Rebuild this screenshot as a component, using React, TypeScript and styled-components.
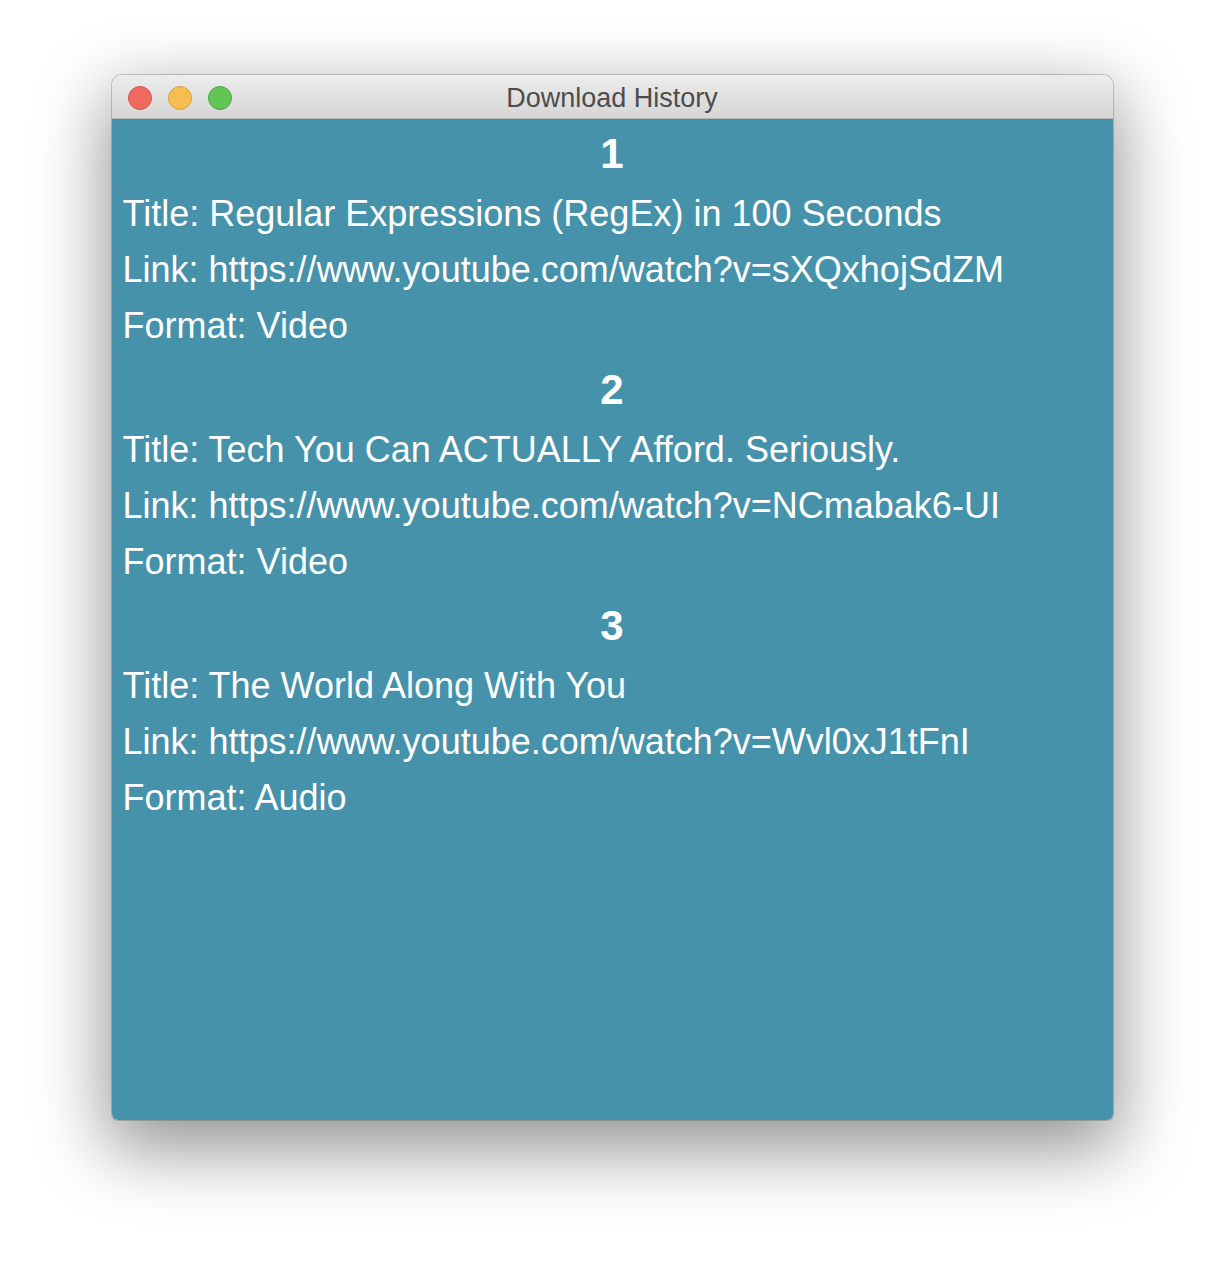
import styled, { createGlobalStyle } from "styled-components";

const GlobalStyle = createGlobalStyle`
  html, body {
    margin: 0;
    padding: 0;
    background: #ffffff;
  }
  * {
    box-sizing: border-box;
  }
`;

const Page = styled.div`
  display: flex;
  justify-content: center;
  padding-top: 75px;
  height: 1268px;
  background: #ffffff;
`;

const Window = styled.div`
  width: 1001px;
  height: 1045px;
  display: flex;
  flex-direction: column;
  border-radius: 10px 10px 6px 6px;
  overflow: hidden;
  box-shadow: 0 0 0 1px rgba(0, 0, 0, 0.18), 0 24px 70px 6px rgba(0, 0, 0, 0.42);
`;

const TitleBar = styled.div`
  position: relative;
  height: 44px;
  flex: none;
  display: flex;
  align-items: center;
  justify-content: center;
  background: linear-gradient(#ececec, #d6d6d6);
  border-bottom: 1px solid #b4b4b4;
`;

const Lights = styled.div`
  position: absolute;
  left: 16px;
  top: 11px;
  display: flex;
  gap: 16px;
`;

const Light = styled.span<{ color: string; edge: string }>`
  width: 24px;
  height: 24px;
  border-radius: 50%;
  background: ${(p) => p.color};
  border: 1px solid ${(p) => p.edge};
`;

const WindowTitle = styled.div`
  font-family: "Liberation Sans", Arial, sans-serif;
  font-size: 27px;
  color: #4d4d4d;
  margin-top: 3px;
`;

const Content = styled.div`
  flex: 1;
  background: #4592aa;
  padding: 3px 11px 0;
  color: #ffffff;
  font-family: "Liberation Sans", Arial, sans-serif;
`;

const Entry = styled.section`
  & + & {
    margin-top: 4px;
  }
`;

const Heading = styled.div`
  font-size: 42px;
  font-weight: bold;
  line-height: 64px;
  text-align: center;
`;

const Line = styled.div`
  font-size: 36px;
  line-height: 56px;
  white-space: nowrap;
`;

const downloads = [
  {
    title: "Regular Expressions (RegEx) in 100 Seconds",
    link: "https://www.youtube.com/watch?v=sXQxhojSdZM",
    format: "Video",
  },
  {
    title: "Tech You Can ACTUALLY Afford. Seriously.",
    link: "https://www.youtube.com/watch?v=NCmabak6-UI",
    format: "Video",
  },
  {
    title: "The World Along With You",
    link: "https://www.youtube.com/watch?v=Wvl0xJ1tFnI",
    format: "Audio",
  },
];

export default function App() {
  return (
    <>
      <GlobalStyle />
      <Page>
        <Window>
          <TitleBar>
            <Lights>
              <Light color="#ee6a5f" edge="#d45449" />
              <Light color="#f6be50" edge="#dba23c" />
              <Light color="#62c655" edge="#4ea844" />
            </Lights>
            <WindowTitle>Download History</WindowTitle>
          </TitleBar>
          <Content>
            {downloads.map((d, i) => (
              <Entry key={d.link}>
                <Heading>{i + 1}</Heading>
                <Line>Title: {d.title}</Line>
                <Line>Link: {d.link}</Line>
                <Line>Format: {d.format}</Line>
              </Entry>
            ))}
          </Content>
        </Window>
      </Page>
    </>
  );
}
